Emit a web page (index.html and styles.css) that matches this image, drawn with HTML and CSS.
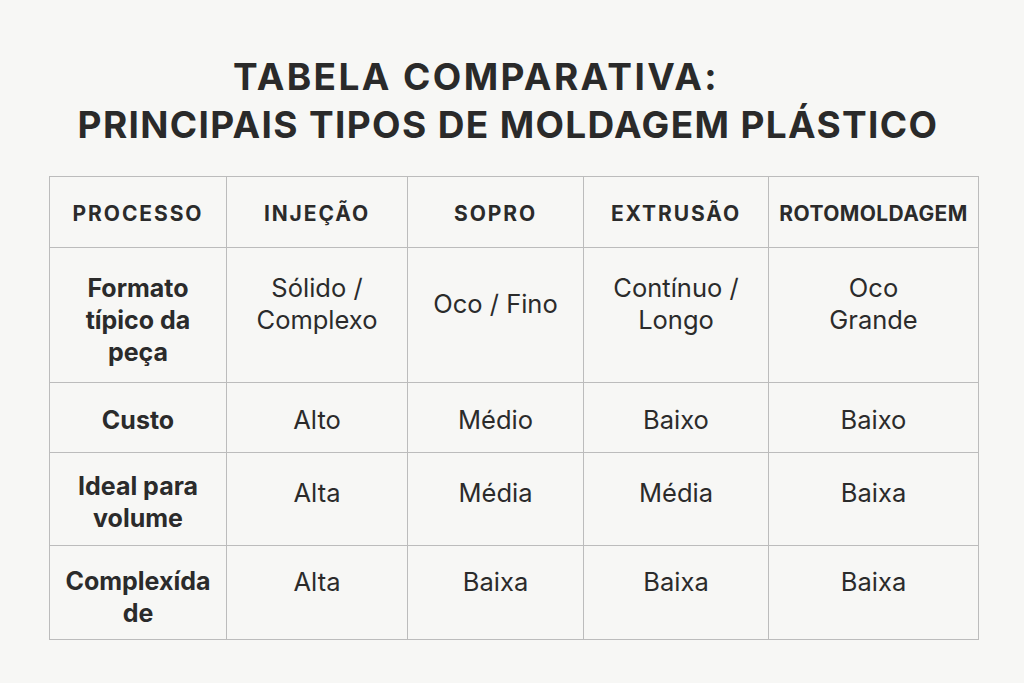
FILE: index.html
```html
<!DOCTYPE html>
<html lang="pt">
<head>
<meta charset="utf-8">
<title>Tabela comparativa</title>
<link rel="stylesheet" href="styles.css">
</head>
<body>
<main class="page">
  <h1 class="title">
    <span class="title-line first">TABELA COMPARATIVA:</span>
    <span class="title-line">PRINCIPAIS TIPOS DE MOLDAGEM PLÁSTICO</span>
  </h1>
  <table class="compare">
    <colgroup>
      <col class="c1"><col class="c2"><col class="c3"><col class="c4"><col class="c5">
    </colgroup>
    <thead>
      <tr class="r-head">
        <th>PROCESSO</th>
        <th>INJEÇÃO</th>
        <th>SOPRO</th>
        <th>EXTRUSÃO</th>
        <th class="narrow">ROTOMOLDAGEM</th>
      </tr>
    </thead>
    <tbody>
      <tr class="r-format">
        <th>Formato<br>típico da<br>peça</th>
        <td>Sólido /<br>Complexo</td>
        <td>Oco / Fino</td>
        <td>Contínuo /<br>Longo</td>
        <td>Oco<br>Grande</td>
      </tr>
      <tr class="r-cost">
        <th>Custo</th>
        <td>Alto</td>
        <td>Médio</td>
        <td>Baixo</td>
        <td>Baixo</td>
      </tr>
      <tr class="r-volume">
        <th>Ideal para<br>volume</th>
        <td>Alta</td>
        <td>Média</td>
        <td>Média</td>
        <td>Baixa</td>
      </tr>
      <tr class="r-complex">
        <th>Complexída<br>de</th>
        <td>Alta</td>
        <td>Baixa</td>
        <td>Baixa</td>
        <td>Baixa</td>
      </tr>
    </tbody>
  </table>
</main>
</body>
</html>
```
FILE: styles.css
```css
html, body {
  margin: 0;
  padding: 0;
  background: #f7f7f5;
}
body {
  width: 1024px;
  height: 683px;
  overflow: hidden;
  font-family: Inter, "Noto Sans", "Liberation Sans", sans-serif;
  color: #2b2b2b;
}
.page {
  padding-top: 53px;
  padding-left: 49px;
}
.title {
  margin: 0;
  display: flex;
  flex-direction: column;
  align-items: center;
  width: 918px;
  font-family: Inter, "Liberation Sans", sans-serif;
  font-weight: 700;
  font-size: 37px;
  line-height: 48px;
  letter-spacing: 1.35px;
  color: #2a2a2a;
}
.title-line.first {
  margin-right: 64px;
  letter-spacing: 2.4px;
}
.compare {
  margin-top: 27px;
  border-collapse: collapse;
  table-layout: fixed;
  width: 929px;
}
.c1 { width: 177px; }
.c2 { width: 181px; }
.c3 { width: 176px; }
.c4 { width: 185px; }
.c5 { width: 210px; }
.compare th, .compare td {
  border: 1px solid #bcbcbc;
  text-align: center;
  vertical-align: middle;
  padding: 0;
}
.compare td {
  font-size: 25.5px;
  font-weight: 400;
  line-height: 32px;
  color: #2b2b2b;
}
.compare tbody th {
  font-size: 25px;
  font-weight: 700;
  line-height: 32px;
  color: #2b2b2b;
}
.r-head th {
  font-size: 21px;
  font-weight: 700;
  letter-spacing: 1.9px;
  height: 67px;
  padding-top: 3px;
}
.r-head th.narrow {
  letter-spacing: 0.4px;
}
.r-format th { height: 125px; padding-top: 9px; }
.r-format td { height: 111px; padding-bottom: 23px; }
.r-cost th, .r-cost td { height: 65px; padding-top: 4px; }
.r-volume th { height: 87px; padding-top: 5px; }
.r-volume td { height: 79px; padding-bottom: 13px; }
.r-complex th { height: 85px; padding-top: 8px; }
.r-complex td { height: 71px; padding-bottom: 22px; }
```
